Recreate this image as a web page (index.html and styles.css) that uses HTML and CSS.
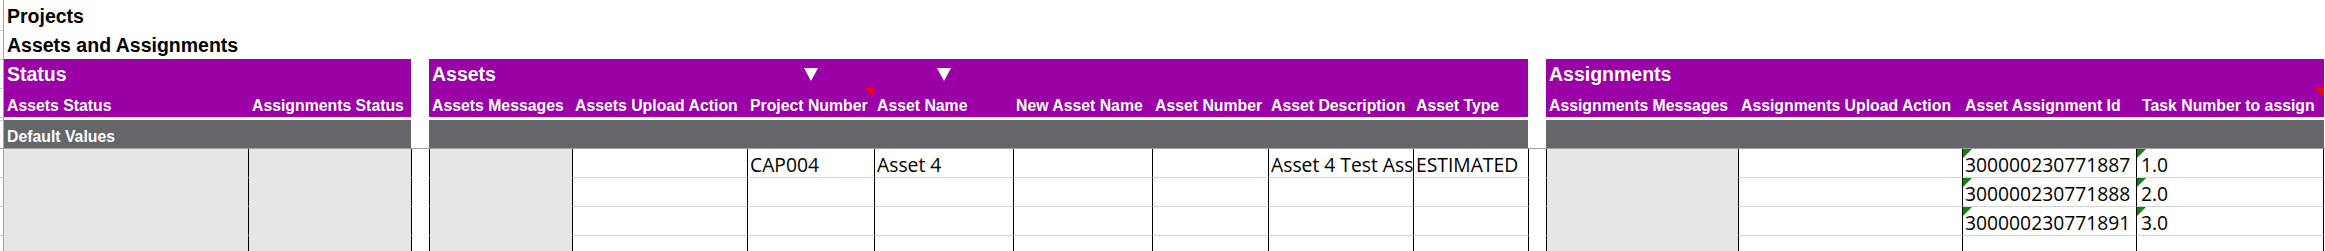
FILE: index.html
```html
<!DOCTYPE html>
<html lang="en">
<head>
<meta charset="utf-8">
<title>Projects - Assets and Assignments</title>
<link rel="stylesheet" href="styles.css">
</head>
<body>
<div class="sheet">
  <!-- row 1 -->
  <div class="m"></div>
  <div class="title">Projects</div>
  <!-- row 2 -->
  <div class="m t"></div>
  <div class="title">Assets and Assignments</div>
  <!-- row 3 : block titles -->
  <div class="m t"></div>
  <div class="p band span2">Status</div>
  <div class="sp"></div>
  <div class="p band span2">Assets</div>
  <div class="p dd"><svg width="14" height="13" viewBox="0 0 14 13"><path d="M0 0H14L7 13Z" fill="#fff"/></svg></div>
  <div class="p dd"><svg width="14" height="13" viewBox="0 0 14 13"><path d="M0 0H14L7 13Z" fill="#fff"/></svg></div>
  <div class="p span4"></div>
  <div class="sp"></div>
  <div class="p band span4">Assignments</div>
  <div></div>
  <!-- row 4 : column headers -->
  <div class="m t"></div>
  <div class="p h">Assets Status</div>
  <div class="p h h-b">Assignments Status</div>
  <div class="sp"></div>
  <div class="p h">Assets Messages</div>
  <div class="p h">Assets Upload Action</div>
  <div class="p h note">Project Number</div>
  <div class="p h">Asset Name</div>
  <div class="p h">New Asset Name</div>
  <div class="p h">Asset Number</div>
  <div class="p h">Asset Description</div>
  <div class="p h">Asset Type</div>
  <div class="sp"></div>
  <div class="p h">Assignments Messages</div>
  <div class="p h">Assignments Upload Action</div>
  <div class="p h">Asset Assignment Id</div>
  <div class="p h note h-tn">Task Number to assign</div>
  <div></div>
  <!-- row 5 : white gap -->
  <div class="m t"></div>
  <div class="gap"></div>
  <!-- row 6 : default values -->
  <div class="m t"></div>
  <div class="dv span2">Default Values</div>
  <div class="sp"></div>
  <div class="dv span8"></div>
  <div class="sp"></div>
  <div class="dv span4"></div>
  <div></div>
  <!-- row 7 : separator line -->
  <div class="line"></div>

  <!-- data row 1 -->
  <div class="m b"></div>
  <div class="d f first"></div>
  <div class="d f"></div>
  <div class="d s"></div>
  <div class="d f"></div>
  <div class="d"></div>
  <div class="d">CAP004</div>
  <div class="d">Asset 4</div>
  <div class="d"></div>
  <div class="d"></div>
  <div class="d">Asset 4 Test Asset</div>
  <div class="d">ESTIMATED</div>
  <div class="d s"></div>
  <div class="d f"></div>
  <div class="d"></div>
  <div class="d g">300000230771887</div>
  <div class="d g last tn">1.0</div>
  <div></div>

  <!-- data row 2 -->
  <div class="m b"></div>
  <div class="d f first"></div>
  <div class="d f"></div>
  <div class="d s"></div>
  <div class="d f"></div>
  <div class="d"></div>
  <div class="d"></div>
  <div class="d"></div>
  <div class="d"></div>
  <div class="d"></div>
  <div class="d"></div>
  <div class="d"></div>
  <div class="d s"></div>
  <div class="d f"></div>
  <div class="d"></div>
  <div class="d g">300000230771888</div>
  <div class="d g last tn">2.0</div>
  <div></div>

  <!-- data row 3 -->
  <div class="m b"></div>
  <div class="d f first"></div>
  <div class="d f"></div>
  <div class="d s"></div>
  <div class="d f"></div>
  <div class="d"></div>
  <div class="d"></div>
  <div class="d"></div>
  <div class="d"></div>
  <div class="d"></div>
  <div class="d"></div>
  <div class="d"></div>
  <div class="d s"></div>
  <div class="d f"></div>
  <div class="d"></div>
  <div class="d g">300000230771891</div>
  <div class="d g last tn">3.0</div>
  <div></div>

  <!-- data row 4 -->
  <div class="m b"></div>
  <div class="d f first"></div>
  <div class="d f"></div>
  <div class="d s"></div>
  <div class="d f"></div>
  <div class="d"></div>
  <div class="d"></div>
  <div class="d"></div>
  <div class="d"></div>
  <div class="d"></div>
  <div class="d"></div>
  <div class="d"></div>
  <div class="d s"></div>
  <div class="d f"></div>
  <div class="d"></div>
  <div class="d"></div>
  <div class="d last"></div>
  <div></div>
</div>
</body>
</html>
```

FILE: styles.css
```css
* {
  box-sizing: border-box;
  margin: 0;
  padding: 0;
}

html, body {
  margin: 0;
  background: #ffffff;
}

.sheet {
  display: grid;
  grid-template-columns: 4px 244px 163px 18px 143px 175px 127px 139px 139px 116px 145px 115px 18px 192px 224px 174px 188px 1fr;
  grid-template-rows: 30px 29px 29px 29px 3px 28px 1px 29px 29px 29px 29px;
  height: 251px;
  overflow: hidden;
  font-family: "Liberation Sans", Arial, sans-serif;
}

.sheet > div {
  display: flex;
  align-items: flex-end;
  white-space: nowrap;
  min-width: 0;
}

/* row-header margin at far left */
.m {
  border-right: 1px solid #a3a3a3;
}
.m.t {
  border-top: 1px solid #c8c8c8;
}
.m.b {
  border-bottom: 1px solid #c8c8c8;
}

.title {
  grid-column: 2 / -1;
  font-weight: bold;
  font-size: 19.5px;
  color: #000;
  padding: 0 0 2px 3px;
}

.p {
  background: #9a00a6;
  color: #ffffff;
  font-weight: bold;
}

.band {
  font-size: 19.5px;
  padding: 0 0 2px 3px;
}

.span2 { grid-column: span 2; }
.span4 { grid-column: span 4; }
.span8 { grid-column: span 8; }

.dd {
  justify-content: center;
  padding-bottom: 7px;
}

.h {
  font-size: 15.8px;
  padding: 0 0 2.5px 3px;
  position: relative;
}
.h-b {
  padding-left: 4px;
}
.h-tn {
  padding-left: 6px;
}

.note::after {
  content: "";
  position: absolute;
  top: 0;
  right: 0;
  width: 9px;
  height: 9px;
  background: #ff0000;
  clip-path: polygon(0 0, 100% 0, 100% 100%);
}

.gap {
  grid-column: 2 / -1;
}

.dv {
  background: #646669;
  color: #ffffff;
  font-weight: bold;
  font-size: 15.8px;
  padding: 0 0 2.5px 3px;
}

.line {
  grid-column: 1 / -1;
  background: #a0a0a0;
}

/* data cells */
.d {
  border-left: 1px solid #000;
  border-bottom: 1px solid #d4d4d4;
  font-family: "Open Sans", "Noto Sans", sans-serif;
  font-size: 19.3px;
  line-height: 20px;
  color: #000;
  padding: 0 0 2.5px 2px;
  overflow: hidden;
  position: relative;
}
.d.first {
  border-left: none;
}
.d.f {
  background: #e6e6e6;
  border-bottom-color: transparent;
}
.d.s {
  border-bottom-color: transparent;
}
.d.last {
  border-right: 1px solid #000;
}
.d.tn {
  padding-left: 4px;
}

.g::before {
  content: "";
  position: absolute;
  top: 0;
  left: 0;
  width: 9px;
  height: 9px;
  background: #128012;
  clip-path: polygon(0 0, 100% 0, 0 100%);
}
```
